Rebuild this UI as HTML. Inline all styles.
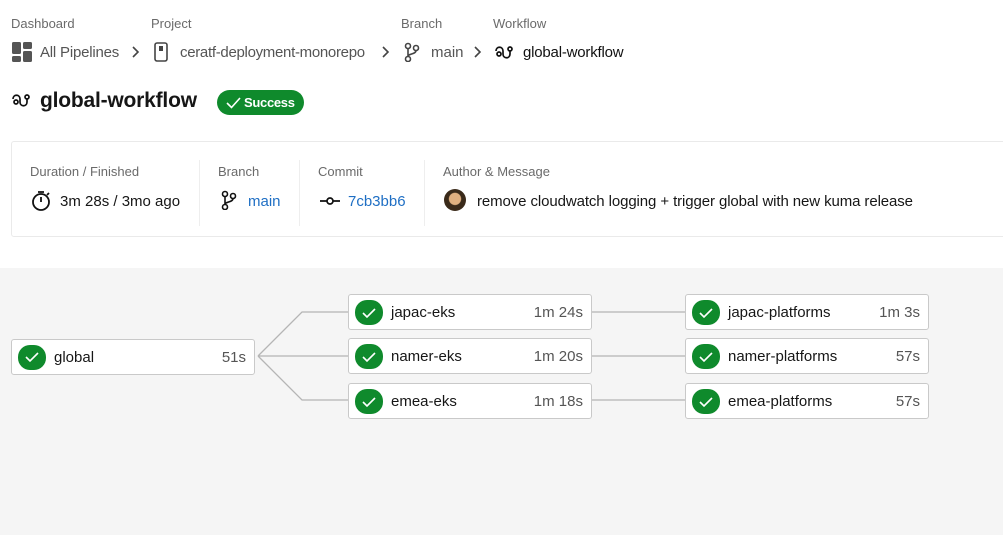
<!DOCTYPE html>
<html><head><style>
*{margin:0;padding:0;box-sizing:border-box}
body{width:1003px;height:535px;overflow:hidden;background:#fff;font-family:"Liberation Sans",sans-serif;color:#161616;position:relative}
.a{position:absolute;white-space:nowrap}
.lbl{font-size:13px;color:#6a6a6a}
.bc{font-size:15px;color:#555}
.gray{position:absolute;left:0;top:268px;width:1003px;height:267px;background:#f5f5f5}
.card{position:absolute;left:11px;top:141px;width:1000px;height:96px;border:1px solid #eaeaea;border-radius:3px;background:#fff}
.node{position:absolute;width:244px;height:36px;background:#fff;border:1px solid #c9c9c9;border-radius:3px;font-size:15px}
.node .ck{position:absolute;left:6px;top:5px;width:28px;height:25px;border-radius:12px;background:#0f8a2c}
.node .n{position:absolute;left:42px;top:9px}
.node .t{position:absolute;right:8px;top:9px;color:#555}
.sep{position:absolute;top:160px;width:1px;height:66px;background:#eee}
</style></head><body>
<div class="gray"></div>
<div class="a lbl" style="left:11px;top:16px">Dashboard</div>
<div class="a lbl" style="left:151px;top:16px">Project</div>
<div class="a lbl" style="left:401px;top:16px">Branch</div>
<div class="a lbl" style="left:493px;top:16px">Workflow</div>
<svg class="a" style="left:12px;top:42px" width="20" height="20"><rect x="0" y="0" width="9" height="12" rx="1.5" fill="#555"/><rect x="11" y="0" width="9" height="7" rx="1.5" fill="#555"/><rect x="0" y="14" width="9" height="6" rx="1.5" fill="#555"/><rect x="11" y="9" width="9" height="11" rx="1.5" fill="#555"/></svg>
<div class="a bc" style="left:40px;top:44px;letter-spacing:-0.2px">All Pipelines</div>
<svg class="a" style="left:131px;top:46px" width="10" height="12" fill="none" stroke="#444" stroke-width="1.6"><path d="M2 1l5 5-5 5"/></svg>
<svg class="a" style="left:154px;top:42px" width="14" height="20"><rect x="1" y="1" width="12" height="18" rx="2" fill="none" stroke="#444" stroke-width="1.6"/><rect x="5" y="4" width="4" height="5" fill="#444"/></svg>
<div class="a bc" style="left:180px;top:44px;letter-spacing:-0.3px">ceratf-deployment-monorepo</div>
<svg class="a" style="left:381px;top:46px" width="10" height="12" fill="none" stroke="#444" stroke-width="1.6"><path d="M2 1l5 5-5 5"/></svg>
<svg class="a" style="left:404px;top:42px" width="16" height="20" fill="none" stroke="#444" stroke-width="1.6"><circle cx="4" cy="4" r="2.5"/><circle cx="4" cy="17" r="2.5"/><circle cx="12" cy="6" r="2.5"/><path d="M4 6.5v8M12 8.5c0 4-8 3-8 6"/></svg>
<div class="a bc" style="left:431px;top:44px">main</div>
<svg class="a" style="left:473px;top:46px" width="10" height="12" fill="none" stroke="#444" stroke-width="1.6"><path d="M2 1l5 5-5 5"/></svg>
<svg class="a" style="left:495px;top:44px" width="20" height="16" fill="none" stroke="#111" stroke-width="1.7"><path d="M1 7c0-5 7-5 7 0v3c0 5 7 5 7 0V6"/><circle cx="15" cy="5" r="2"/><circle cx="4" cy="10" r="2"/></svg>
<div class="a" style="left:523px;top:44px;font-size:15px;color:#111;letter-spacing:-0.2px">global-workflow</div>
<svg class="a" style="left:12px;top:92px" width="20" height="16" fill="none" stroke="#111" stroke-width="1.7"><path d="M1 7c0-5 7-5 7 0v3c0 5 7 5 7 0V6"/><circle cx="15" cy="5" r="2"/><circle cx="4" cy="10" r="2"/></svg>
<div class="a" style="left:40px;top:89px;font-size:21px;font-weight:bold;letter-spacing:-0.2px">global-workflow</div>
<div class="a" style="left:217px;top:90px;width:87px;height:25px;border-radius:13px;background:#0f8a2c;color:#fff;font-size:13px;font-weight:bold;padding:5px 0 0 27px;letter-spacing:-0.3px">Success</div>
<svg class="a" style="left:226px;top:96px" width="16" height="14" fill="none" stroke="#fff" stroke-width="1.6"><path d="M1 7l4.5 4.5L14 2"/></svg>
<div class="card"></div>
<div class="sep" style="left:199px"></div><div class="sep" style="left:299px"></div><div class="sep" style="left:424px"></div>
<div class="a lbl" style="left:30px;top:164px">Duration / Finished</div>
<div class="a lbl" style="left:218px;top:164px">Branch</div>
<div class="a lbl" style="left:318px;top:164px">Commit</div>
<div class="a lbl" style="left:443px;top:164px">Author &amp; Message</div>
<svg class="a" style="left:31px;top:190px" width="20" height="22" fill="none" stroke="#111" stroke-width="1.8"><circle cx="10" cy="12" r="8"/><path d="M7 2h6M10 12V7M16 5l2-2"/></svg>
<div class="a" style="left:60px;top:193px;font-size:15px">3m 28s / 3mo ago</div>
<svg class="a" style="left:221px;top:190px" width="16" height="20" fill="none" stroke="#111" stroke-width="1.6"><circle cx="4" cy="4" r="2.5"/><circle cx="4" cy="17" r="2.5"/><circle cx="12" cy="6" r="2.5"/><path d="M4 6.5v8M12 8.5c0 4-8 3-8 6"/></svg>
<div class="a" style="left:248px;top:193px;font-size:15px;color:#1f6fc4">main</div>
<svg class="a" style="left:320px;top:194px" width="20" height="14" fill="none" stroke="#111" stroke-width="1.7"><circle cx="10" cy="7" r="3"/><path d="M0 7h7M13 7h7"/></svg>
<div class="a" style="left:348px;top:193px;font-size:15px;color:#1f6fc4">7cb3bb6</div>
<div class="a" style="left:444px;top:189px;width:22px;height:22px;border-radius:50%;background:radial-gradient(circle at 50% 45%,#e0b080 0 35%,#3a2a1a 40%)"></div>
<div class="a" style="left:477px;top:193px;font-size:15px;letter-spacing:-0.1px">remove cloudwatch logging + trigger global with new kuma release</div>
<svg class="a" style="left:0;top:268px" width="1003" height="267" fill="none" stroke="#b5b5b5" stroke-width="1.3"><path d="M258 88L302 44H348M258 88H348M258 88L302 132H348M591 44H685M591 88H685M591 132H685"/></svg>
<div class="node" style="left:11px;top:339px"><div class="ck"></div><div class="n">global</div><div class="t">51s</div></div>
<div class="node" style="left:348px;top:294px"><div class="ck"></div><div class="n">japac-eks</div><div class="t">1m 24s</div></div>
<div class="node" style="left:348px;top:338px"><div class="ck"></div><div class="n">namer-eks</div><div class="t">1m 20s</div></div>
<div class="node" style="left:348px;top:383px"><div class="ck"></div><div class="n">emea-eks</div><div class="t">1m 18s</div></div>
<div class="node" style="left:685px;top:294px"><div class="ck"></div><div class="n">japac-platforms</div><div class="t">1m 3s</div></div>
<div class="node" style="left:685px;top:338px"><div class="ck"></div><div class="n">namer-platforms</div><div class="t">57s</div></div>
<div class="node" style="left:685px;top:383px"><div class="ck"></div><div class="n">emea-platforms</div><div class="t">57s</div></div>
<svg class="a" style="left:0;top:0" width="1003" height="535" fill="none" stroke="#fff" stroke-width="1.6">
<path d="M26 357l4 4 8-8M363 313l4 4 8-8M363 357l4 4 8-8M363 402l4 4 8-8M700 313l4 4 8-8M700 357l4 4 8-8M700 402l4 4 8-8"/></svg>
</body></html>
